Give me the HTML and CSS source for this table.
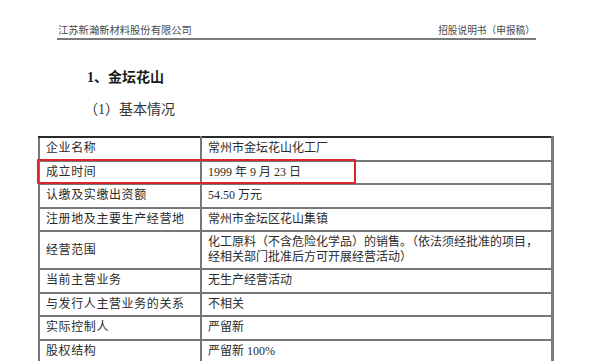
FILE: index.html
```html
<!DOCTYPE html>
<html lang="zh-CN">
<head>
<meta charset="utf-8">
<title>招股说明书</title>
<link rel="stylesheet" href="styles.css">
</head>
<body>
<div class="page">
  <div class="header">
    <span class="header-left">江苏新瀚新材料股份有限公司</span>
    <span class="header-right">招股说明书（申报稿）</span>
  </div>
  <h1 class="title">1、金坛花山</h1>
  <h2 class="subtitle">（1）基本情况</h2>
  <div class="table-wrap">
    <table class="info">
      <tr><td class="k">企业名称</td><td class="v">常州市金坛花山化工厂</td></tr>
      <tr><td class="k">成立时间</td><td class="v">1999 年 9 月 23 日</td></tr>
      <tr><td class="k">认缴及实缴出资额</td><td class="v">54.50 万元</td></tr>
      <tr><td class="k">注册地及主要生产经营地</td><td class="v">常州市金坛区花山集镇</td></tr>
      <tr class="tall"><td class="k">经营范围</td><td class="v">化工原料（不含危险化学品）的销售。（依法须经批准的项目，经相关部门批准后方可开展经营活动）</td></tr>
      <tr><td class="k">当前主营业务</td><td class="v">无生产经营活动</td></tr>
      <tr><td class="k">与发行人主营业务的关系</td><td class="v">不相关</td></tr>
      <tr><td class="k">实际控制人</td><td class="v">严留新</td></tr>
      <tr><td class="k">股权结构</td><td class="v">严留新 100%</td></tr>
    </table>
    <div class="highlight"></div>
  </div>
</div>
</body>
</html>
```

FILE: styles.css
```css
html, body {
  margin: 0;
  padding: 0;
  background: #ffffff;
}

body {
  font-family: "Liberation Serif", "Noto Sans CJK SC", serif;
  color: #2b2b2b;
  overflow: hidden;
}

.page {
  padding-top: 24px;
}

.header {
  margin: 0 64px 0 57px;
  padding: 0 1px 1px 1px;
  display: flex;
  justify-content: space-between;
  align-items: flex-end;
  border-bottom: 2px solid #7a7a7a;
  line-height: 13px;
  color: #4a4a4a;
}

.header-left {
  font-size: 10.3px;
}

.header-right {
  font-size: 9.7px;
}

.title {
  margin: 29px 0 0 87px;
  font-size: 14px;
  line-height: 18px;
  font-weight: bold;
  color: #1a1a1a;
}

.subtitle {
  margin: 14px 0 0 84px;
  font-size: 14px;
  line-height: 18px;
  font-weight: normal;
  color: #333333;
}

.table-wrap {
  position: relative;
  margin: 17px 0 0 38px;
  width: 516px;
}

.info {
  width: 516px;
  border-collapse: collapse;
  border-top: 2px solid #2a2a2a;
  border-left: 2px solid #3a3a3a;
  border-right: 3px solid #7a7a7a;
  font-size: 12px;
}

.info td {
  border: 2px solid #777777;
  height: 21.5px;
  padding: 0 6px;
  line-height: 15px;
  vertical-align: middle;
}

.info tr:first-child td {
  border-top: 2px solid #2a2a2a;
}

.info td.k {
  width: 148px;
  letter-spacing: 0.6px;
}

.info tr.tall td {
  height: 36px;
}

.highlight {
  position: absolute;
  left: -1px;
  top: 23px;
  width: 315px;
  height: 21px;
  border: 2px solid #d8272d;
  border-radius: 1px;
}
```
